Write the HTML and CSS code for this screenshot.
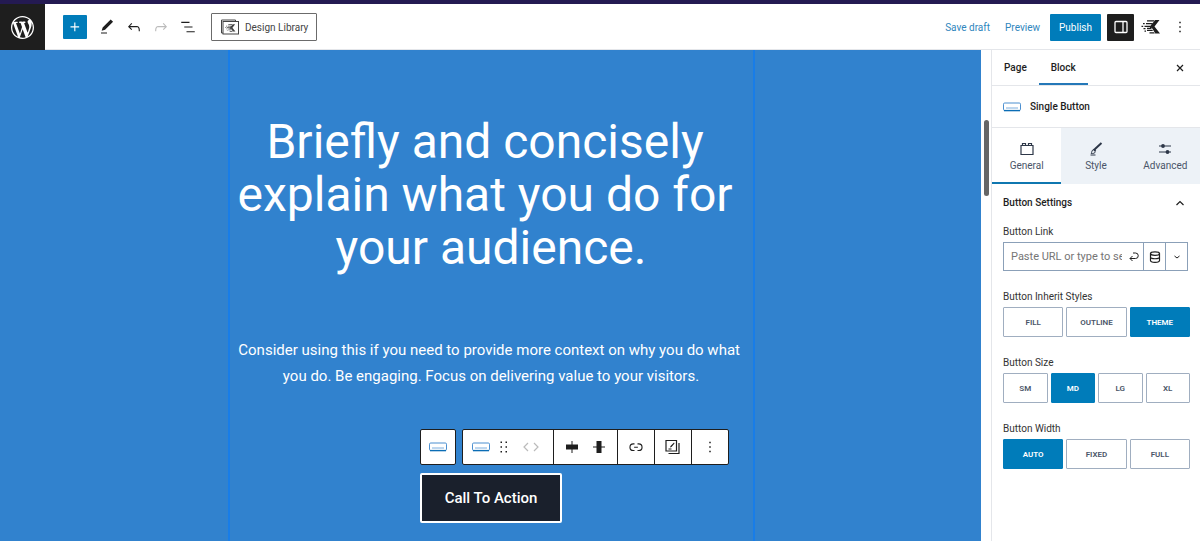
FILE: index.html
```
<!DOCTYPE html>
<html lang="en">
<head>
<meta charset="utf-8">
<title>Edit Page</title>
<link rel="stylesheet" href="styles.css">
</head>
<body>
<svg class="defs" aria-hidden="true">
  <symbol id="i-button" viewBox="0 0 18 10">
    <rect x=".5" y="1" width="17" height="7.5" rx="1.2" fill="#fff" stroke="#4b8fd0"/>
    <path d="M1 8.6h16" stroke="#0b6db5" stroke-width="1.4"/>
    <path d="M3 6h12" stroke="#5b9bd5" stroke-width=".8"/>
  </symbol>
  <symbol id="i-kadence" viewBox="0 0 20 16">
    <path d="M18.500 1h-4.300L9 7.200v1.600l1.800 0L14.300 14.500h4.700L13.500 7.500zM6 1.200h7.500l-.8 1.200H6zM8.500 14.600h5.300l-.9-1.300H8.500zM5 4h6.500l-1 1.200H5zM6 10.800h5.200l.8 1.200H6zM3.500 6.700H9v1.200H3.500zM6 8.800h4.500V10H6zM2 4h1.700v1.200H2zM.5 6.700h1.700v1.200H.5zM2.500 9h2v1.200h-2zM3.500 11.500h1.500v1.200H3.500z"/>
  </symbol>
  <symbol id="i-undo" viewBox="0 0 24 24"><path d="M18.3 11.7c-.6-.6-1.4-.9-2.300-.9H6.700l2.900-3.300-1.100-1-4.500 5L8.500 16l1-1-2.700-2.700H16c.5 0 .9.200 1.300.5 1 1 1 3.400 1 4.500v.3h1.500v-.2c0-1.500 0-4.300-1.500-5.700z"/></symbol>
  <symbol id="i-more" viewBox="0 0 24 24"><path d="M13 19h-2v-2h2v2zm0-6h-2v-2h2v2zm0-6h-2V5h2v2z"/></symbol>
</svg>
<div class="editor">
  <header class="topbar">
    <a class="logo" href="#" aria-label="View pages">
      <svg viewBox="0 0 20 20" width="23" height="23"><path d="M20 10c0-5.510-4.490-10-10-10C4.480 0 0 4.490 0 10c0 5.520 4.480 10 10 10 5.510 0 10-4.480 10-10zM7.780 15.370L4.370 6.220c.55-.02 1.170-.08 1.170-.08.5-.06.44-1.130-.06-1.110 0 0-1.450.11-2.370.11-.18 0-.37 0-.58-.01C4.120 2.690 6.870 1.110 10 1.110c2.330 0 4.450.87 6.050 2.340-.68-.11-1.650.39-1.650 1.580 0 .74.45 1.360.9 2.100.35.61.55 1.360.55 2.460 0 1.490-1.400 5-1.400 5l-3.030-8.370c.54-.02.82-.17.82-.17.5-.05.44-1.250-.06-1.220 0 0-1.440.12-2.380.12-.87 0-2.330-.12-2.330-.12-.5-.03-.56 1.200-.06 1.220l.92.080 1.260 3.410zM17.410 10c.24-.64.74-1.870.43-4.250.7 1.290 1.050 2.710 1.050 4.250 0 3.290-1.730 6.240-4.400 7.780.97-2.590 1.940-5.200 2.920-7.780zM6.100 18.090C3.120 16.650 1.110 13.530 1.110 10c0-1.300.23-2.480.72-3.590C3.250 10.300 4.670 14.200 6.100 18.090zm4.030-6.630l2.580 6.980c-.86.29-1.760.45-2.710.45-.79 0-1.570-.11-2.290-.33.81-2.380 1.620-4.740 2.420-7.100z"/></svg>
    </a>
    <div class="tools">
      <button class="icon-btn add" aria-label="Add block"><svg viewBox="0 0 24 24"><path d="M11 12.500V17.500H12.500V12.500H17.500V11H12.500V6H11V11H6V12.500H11Z"/></svg></button>
      <button class="icon-btn" aria-label="Tools"><svg viewBox="0 0 24 24"><path d="M20.100 5.100L16.900 2 6.200 12.700l-1.300 4.400 4.500-1.300L20.100 5.100zM4 20.800h8v-1.500H4v1.500z"/></svg></button>
      <button class="icon-btn" aria-label="Undo"><svg><use href="#i-undo"/></svg></button>
      <button class="icon-btn faded" aria-label="Redo"><svg class="mirrored"><use href="#i-undo"/></svg></button>
      <button class="icon-btn" aria-label="List view"><svg viewBox="0 0 24 24"><path d="M3 5h11v1.600H3V5Zm4 6.200h11v1.600H7v-1.600ZM21 17.500H10v1.600h11v-1.600Z"/></svg></button>
    </div>
    <button class="library">
      <svg viewBox="0 0 18 15" width="18" height="15"><path d="M3 13.500H.5V.5h14V2" fill="none" stroke="#444"/><rect x="2" y="2" width="15.500" height="12.500" fill="#fff" stroke="#444"/><use href="#i-kadence" x="4" y="4" width="11" height="9"/></svg>
      Design Library
    </button>
    <nav class="actions">
      <a href="#">Save draft</a>
      <a href="#">Preview</a>
      <button class="publish">Publish</button>
      <button class="settings" aria-label="Settings"><svg viewBox="0 0 14 14" width="14" height="14"><rect x="1" y="1.500" width="12" height="11" rx="1" fill="none" stroke="#fff" stroke-width="1.300"/><path d="M9 1.500v11" stroke="#fff" stroke-width="1.300"/></svg></button>
      <button class="icon-btn" aria-label="Kadence blocks"><svg class="wide"><use href="#i-kadence"/></svg></button>
      <button class="icon-btn" aria-label="Options"><svg><use href="#i-more"/></svg></button>
    </nav>
  </header>

  <main class="canvas">
    <section class="column">
      <h1>Briefly and concisely explain what you do for your audience.</h1>
      <p>Consider using this if you need to provide more context on why you do what you do. Be engaging. Focus on delivering value to your visitors.</p>
      <div class="cta-wrap">
        <div class="block-toolbar" role="toolbar" aria-label="Block tools">
          <div class="group">
            <button aria-label="Select parent block"><svg class="blk"><use href="#i-button"/></svg></button>
          </div>
          <div class="group main">
            <div class="part mover">
              <button aria-label="Single Button"><svg class="blk"><use href="#i-button"/></svg></button>
              <button class="drag" aria-label="Drag"><svg viewBox="0 0 8 14" width="8" height="14"><path d="M.5 1.500H2V3H.5zM5.500 1.500H7V3H5.500zM.5 6.200H2v1.500H.5zM5.500 6.200H7v1.500H5.500zM.5 11H2v1.500H.5zM5.500 11H7v1.500H5.500z"/></svg></button>
              <button class="move faded" aria-label="Move"><svg viewBox="0 0 18 10" width="18" height="10"><path d="M6 1L2 5l4 4M12 1l4 4-4 4" fill="none" stroke="currentColor" stroke-width="1.200"/></svg></button>
            </div>
            <div class="part aligns">
              <button aria-label="Align vertical"><svg viewBox="0 0 14 14" width="14" height="14"><path d="M1 4.500h12v5H1zM6.500 1h1v12h-1z"/></svg></button>
              <button aria-label="Align horizontal"><svg viewBox="0 0 14 14" width="14" height="14"><path d="M4.500 1h5v12h-5zM1 6.500h12v1H1z"/></svg></button>
            </div>
            <div class="part"><button aria-label="Link"><svg viewBox="0 0 24 24"><path d="M10 17.400H8.400A5.200 5.200 0 1 1 8.400 7H10v1.500H8.400a3.700 3.700 0 0 0 0 7.400H10v1.500ZM14 7h1.600a5.200 5.200 0 0 1 0 10.400H14v-1.500h1.600a3.700 3.700 0 0 0 0-7.400H14V7Zm-4.500 6h5v-1.500h-5V13Z"/></svg></button></div>
            <div class="part"><button aria-label="Copy styles"><svg viewBox="0 0 15 15" width="15" height="15"><path d="M1 1h10.500v10.500H1zM14 3.500V14H3.500" fill="none" stroke="currentColor" stroke-width="1.200"/><path d="M9 3L5.500 6.500 5 8l1.500-.5L9.500 4zM3.500 9h3v1h-3z"/></svg></button></div>
            <div class="part"><button aria-label="Options"><svg><use href="#i-more"/></svg></button></div>
          </div>
        </div>
        <button class="cta">Call To Action</button>
      </div>
    </section>
  </main>
  <div class="scroll" aria-hidden="true"><div class="thumb"></div></div>

  <aside class="sidebar">
    <div class="panel-tabs">
      <button>Page</button>
      <button class="active">Block</button>
      <button class="close" aria-label="Close settings"><svg viewBox="0 0 8 8" width="8" height="8"><path d="M1 1l6 6M7 1L1 7" stroke="#1e1e1e" stroke-width="1.200"/></svg></button>
    </div>
    <h2 class="card"><svg class="blk"><use href="#i-button"/></svg>Single Button</h2>
    <div class="mode-tabs">
      <button class="active"><svg viewBox="0 0 14 14" width="14" height="14"><path d="M1 3.500h12v9H1zM2.500 3V1.500h3V3M8.500 3V1.500h3V3" fill="none" stroke="currentColor" stroke-width="1.200"/></svg>General</button>
      <button><svg viewBox="0 0 14 14" width="14" height="14"><path d="M12.500 1L6 7M4.500 7l2 2" fill="none" stroke="currentColor" stroke-width="2"/><path d="M4.500 7.500C2.800 8 3 10 2.200 11.500 4 11.500 6 11.500 6.500 9.500" fill="none" stroke="currentColor"/><path d="M1.500 13h5" stroke="currentColor"/></svg>Style</button>
      <button><svg viewBox="0 0 14 14" width="14" height="14"><path d="M1 4h12M1 10h12" stroke="currentColor" stroke-width="1.200"/><circle cx="5" cy="4" r="1.900"/><circle cx="9.500" cy="10" r="1.900"/></svg>Advanced</button>
    </div>
    <div class="settings-panel">
      <button class="panel-title">Button Settings<svg viewBox="0 0 10 6" width="10" height="6"><path d="M1.500 5L5 1.500 8.500 5" fill="none" stroke="currentColor" stroke-width="1.200"/></svg></button>
      <div class="field link-field">
        <label for="url">Button Link</label>
        <div class="url-row">
          <input id="url" type="text" placeholder="Paste URL or type to search">
          <button class="submit" aria-label="Submit"><svg viewBox="0 0 10 10" width="10" height="10"><path d="M4 1h2.500a2.700 2.700 0 0 1 0 5.500H1M3.500 4L1 6.500 3.500 9" fill="none" stroke="currentColor"/></svg></button>
          <button class="db" aria-label="Dynamic content"><svg viewBox="0 0 12 12" width="12" height="12"><path d="M1.500 2.500v7c0 2.500 9 2.500 9 0v-7M1.500 6c0 2.300 9 2.300 9 0" fill="none" stroke="currentColor" stroke-width="1.200"/><ellipse cx="6" cy="2.600" rx="4.500" ry="1.800" fill="none" stroke="currentColor" stroke-width="1.200"/></svg></button>
          <button class="caret" aria-label="Link options"><svg viewBox="0 0 6 4" width="6" height="4"><path d="M.5 1L3 3l2.500-2" fill="none" stroke="currentColor"/></svg></button>
        </div>
      </div>
      <div class="field" role="group" aria-labelledby="l-style">
        <span class="label" id="l-style">Button Inherit Styles</span>
        <div class="choices"><button>FILL</button><button>OUTLINE</button><button class="on">THEME</button></div>
      </div>
      <div class="field" role="group" aria-labelledby="l-size">
        <span class="label" id="l-size">Button Size</span>
        <div class="choices"><button>SM</button><button class="on">MD</button><button>LG</button><button>XL</button></div>
      </div>
      <div class="field" role="group" aria-labelledby="l-width">
        <span class="label" id="l-width">Button Width</span>
        <div class="choices"><button class="on">AUTO</button><button>FIXED</button><button>FULL</button></div>
      </div>
    </div>
  </aside>
</div>
</body>
</html>
```
FILE: styles.css
```
* { box-sizing: border-box; }
body {
  margin: 0;
  font-family: Roboto, "Liberation Sans", sans-serif;
  font-size: 10px;
  color: #1e1e1e;
  background: #fff;
}
button {
  font: inherit;
  color: inherit;
  background: none;
  border: 0;
  padding: 0;
  display: flex;
  align-items: center;
  justify-content: center;
}
svg { fill: currentColor; flex: none; width: 18px; height: 18px; }
svg[width="8"] { width: 8px; }
svg[width="6"] { width: 6px; }
svg[width="10"] { width: 10px; }
svg[width="12"] { width: 12px; }
svg[width="14"] { width: 14px; }
svg[width="15"] { width: 15px; }
svg[width="23"] { width: 23px; height: 23px; }
svg.blk { width: 18px; height: 10px; }
svg.wide { width: 20px; height: 16px; }
.defs { position: absolute; width: 0; height: 0; }
.mirrored { transform: scaleX(-1); }
.faded { color: #bbb; }

.editor {
  min-height: 100vh;
  display: grid;
  grid-template-columns: 1fr 10px 209px;
  grid-template-rows: auto 1fr;
  border-top: 4px solid #241a52;
}

/* Top bar */
.topbar {
  grid-column: 1 / -1;
  display: flex;
  align-items: center;
  height: 46px;
  box-shadow: inset 0 -1px #e4e6ea;
}
.logo {
  align-self: stretch;
  width: 45px;
  display: grid;
  place-items: center;
  background: #1e1e1e;
  color: #fff;
}
.tools { display: flex; gap: 3px; margin-left: 18px; }
.icon-btn { width: 24px; height: 24px; }
.add { background: #007cba; color: #fff; border-radius: 1px; margin-right: 5px; }
.library {
  height: 28px;
  margin-left: 11px;
  padding: 0 8px 0 9px;
  gap: 6px;
  border: 1px solid #6b6b6b;
  border-radius: 1px;
  color: #444;
  white-space: nowrap;
}
.actions { display: flex; align-items: center; margin-left: auto; padding-right: 8px; }
.actions a { color: #2f86bd; text-decoration: none; margin-right: 15px; }
.actions a + a { margin-right: 10px; }
.publish { width: 51px; height: 27px; background: #007cba; color: #fff; border-radius: 1px; }
.settings { width: 27px; height: 27px; margin: 0 5px 0 6px; background: #1e1e1e; border-radius: 1px; }
.actions .icon-btn + .icon-btn { margin-left: 5px; }

/* Canvas */
.canvas { background: #3182ce; display: flex; justify-content: center; }
.column {
  width: 527px;
  margin-left: 1px;
  padding: 65px 6px 18px;
  border: solid #187de8;
  border-width: 0 2px;
  color: #fff;
  text-align: center;
}
.column h1 {
  margin: 0 0 63px;
  font-size: 48px;
  line-height: 53px;
  font-weight: 400;
  white-space: break-spaces;
}
.column p {
  margin: 0 0 84px;
  font-size: 15px;
  line-height: 26px;
  white-space: break-spaces;
}
.cta-wrap { position: relative; width: fit-content; margin: 0 auto; }
.cta {
  height: 50px;
  padding: 0 23px;
  border: 2px solid #fff;
  border-radius: 2px;
  background: #1a202c;
  color: #fff;
  font-size: 15px;
  font-weight: 500;
  white-space: nowrap;
}
.block-toolbar {
  position: absolute;
  bottom: calc(100% + 8px);
  left: 0;
  display: flex;
  gap: 6px;
  color: #1e1e1e;
}
.group { display: flex; height: 36px; background: #fff; border: 1px solid #1e1e1e; border-radius: 2px; }
.group > button { width: 34px; }
.part { display: flex; justify-content: center; width: 37px; }
.part + .part { border-left: 1px solid #1e1e1e; }
.mover { width: 90px; justify-content: flex-start; padding-left: 9px; }
.drag { width: 28px; }
.move { padding-left: 4px; }
.aligns { width: 64px; gap: 13px; }

/* Scroll track */
.scroll { padding: 70px 2px 0; background: #fff; }
.thumb { width: 5px; height: 76px; margin: 0 auto; border-radius: 3px; background: #666; }

/* Sidebar */
.sidebar { border-left: 1px solid #e4e6ea; }
.panel-tabs { display: flex; height: 36px; border-bottom: 1px solid #e4e6ea; font-weight: 500; }
.panel-tabs button { padding: 0 12px; }
.panel-tabs .active { box-shadow: inset 0 -2px #2478b8; }
.panel-tabs .close { margin-left: auto; padding: 0 16px; }
.card {
  display: flex;
  align-items: center;
  gap: 9px;
  height: 42px;
  margin: 0;
  padding: 0 11px;
  border-bottom: 1px solid #e4e6ea;
  font-size: 10px;
  font-weight: 500;
}
.mode-tabs { display: grid; grid-template-columns: repeat(3, 1fr); height: 56px; }
.mode-tabs button { flex-direction: column; gap: 4px; background: #edf2f7; color: #4a5568; }
.mode-tabs svg { height: 14px; color: #2d3748; }
.mode-tabs .active { background: #fff; box-shadow: inset 0 -2px #0f77b0; }
.settings-panel { padding: 12px 10px 0 11px; }
.panel-title { width: 100%; height: 13px; justify-content: space-between; padding-right: 5px; font-weight: 500; }
.field { margin-top: 19px; }
.field label, .label { display: block; height: 13px; line-height: 13px; margin-bottom: 4px; color: #333; }
.link-field { margin-top: 16px; }
.url-row { display: flex; height: 29px; margin-right: 2px; border: 1px solid #8ba0b8; }
.url-row input {
  flex: 1;
  min-width: 0;
  border: 0;
  padding: 0;
  margin: 0 7px;
  outline: 0;
  background: none;
  font: inherit;
  font-size: 11px;
  color: #444;
}
.url-row input::placeholder { color: #757575; opacity: 1; }
.url-row .submit { margin-right: 4px; }
.url-row .db, .url-row .caret { width: 22px; border-left: 1px solid #8ba0b8; }
.choices { display: flex; gap: 3px; }
.choices button {
  flex: 1 1 0;
  height: 30px;
  border: 1px solid #a0aec0;
  border-radius: 1px;
  color: #4a5568;
  font-size: 8px;
  font-weight: 600;
}
.choices .on { background: #007cba; border-color: #007cba; color: #fff; }
```
